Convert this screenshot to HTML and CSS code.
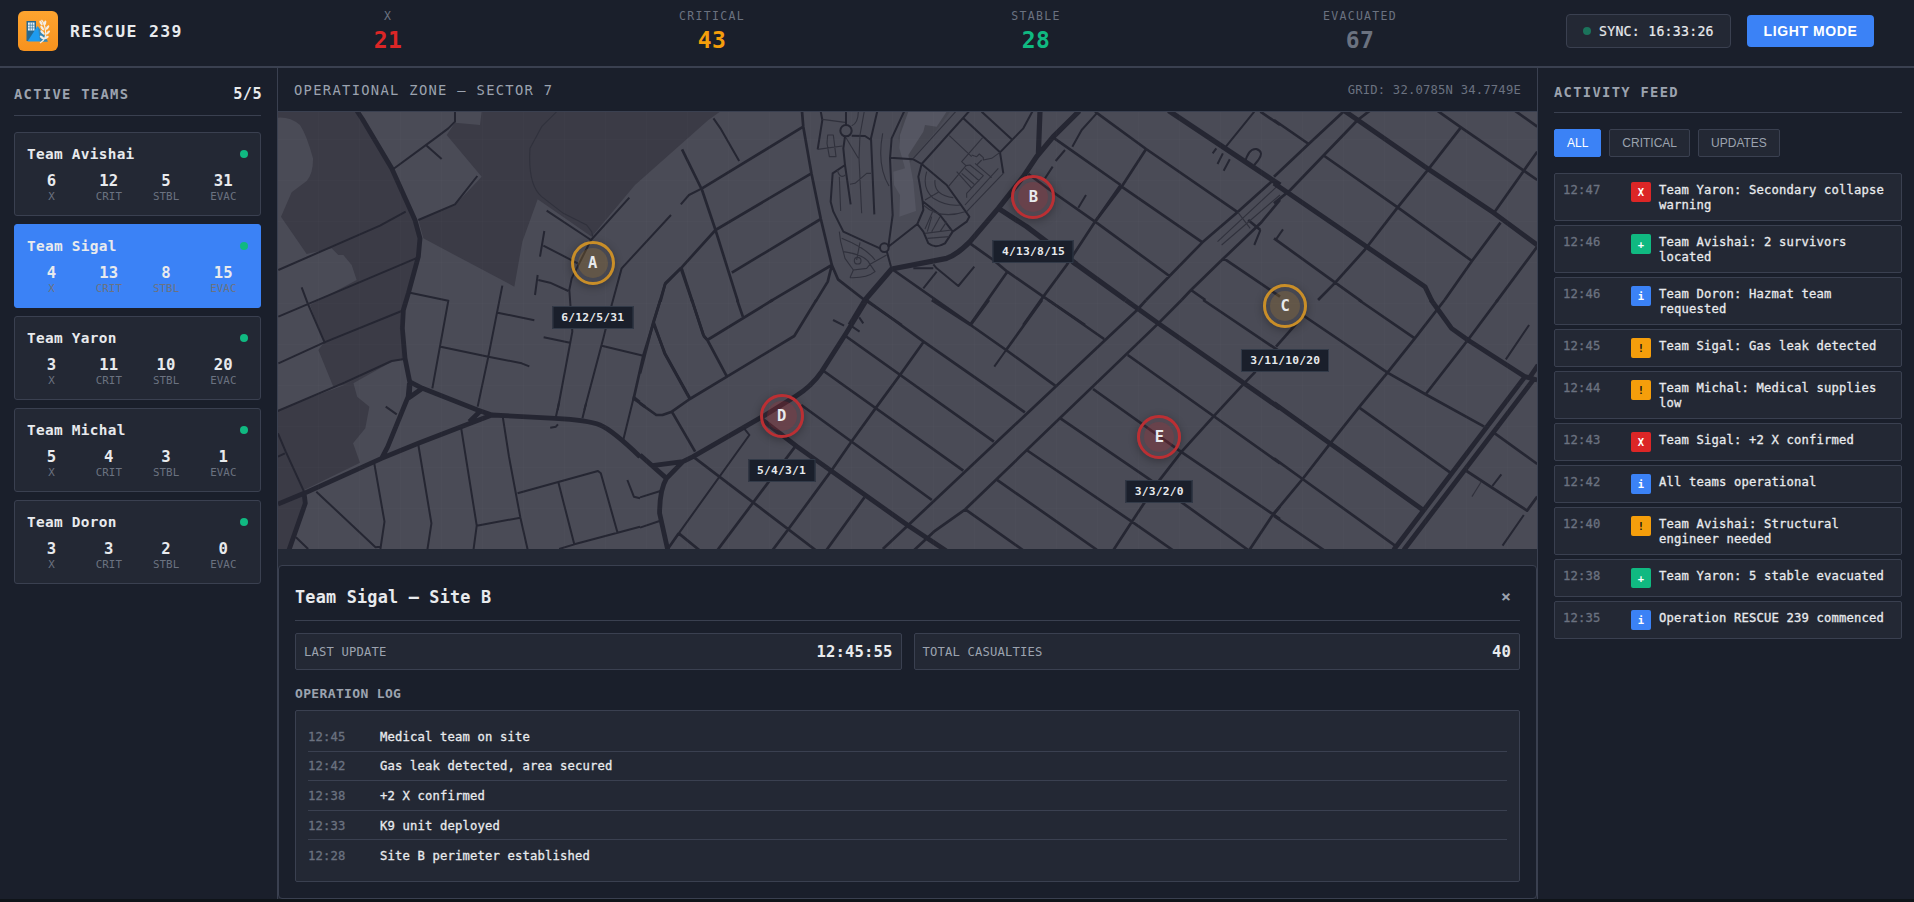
FILE: index.html
```html
<!DOCTYPE html>
<html lang="en">
<head>
<meta charset="utf-8">
<title>RESCUE 239</title>
<link rel="stylesheet" href="styles.css">
</head>
<body>
<div class="app">
<header class="topbar">
  <div class="brand">
    <svg class="logo" viewBox="0 0 40 40">
      <defs><linearGradient id="lg" x1="0" y1="0" x2="0" y2="1"><stop offset="0" stop-color="#fea42f"/><stop offset="1" stop-color="#f6921e"/></linearGradient></defs>
      <rect width="40" height="40" rx="6" fill="url(#lg)"/>
      <rect x="8.500" y="10" width="9.500" height="20" fill="#27688f"/>
      <path d="M9.500 30.500L19.500 15L26 24L29.500 30.500Z" fill="#1e9bef"/>
      <path d="M20 16L26 24L30 30.500H22Z" fill="#3585b5"/>
      <rect x="10" y="11.500" width="6.500" height="8" fill="#e8f4fb"/>
      <path d="M12.200 11.500v8M14.400 11.500v8M10 14.200h6.500M10 16.900h6.500" stroke="#27688f" stroke-width=".6"/>
      <path d="M22 32Q29 28 27.500 20Q27 13 23.500 9" fill="none" stroke="#f3eee5" stroke-width="1.200"/>
      <g fill="#f3eee5"><ellipse cx="23" cy="12" rx="1.200" ry="2.600" transform="rotate(-30 23 12)"/><ellipse cx="27" cy="12" rx="1.200" ry="2.600" transform="rotate(15 27 12)"/><ellipse cx="24.200" cy="17" rx="1.200" ry="2.800" transform="rotate(-35 24.200 17)"/><ellipse cx="29.500" cy="16.500" rx="1.200" ry="2.600" transform="rotate(35 29.500 16.500)"/><ellipse cx="24.500" cy="21.500" rx="1.200" ry="2.800" transform="rotate(-45 24.500 21.500)"/><ellipse cx="30" cy="21.500" rx="1.200" ry="2.600" transform="rotate(45 30 21.500)"/><ellipse cx="24" cy="26.500" rx="1.200" ry="2.600" transform="rotate(-55 24 26.500)"/><ellipse cx="28.500" cy="26.500" rx="1.200" ry="2.500" transform="rotate(60 28.500 26.500)"/></g>
    </svg>
    <span class="brand-name">RESCUE 239</span>
  </div>
  <div class="totals">
    <div class="total red"><span>X</span><b>21</b></div>
    <div class="total amber"><span>CRITICAL</span><b>43</b></div>
    <div class="total green"><span>STABLE</span><b>28</b></div>
    <div class="total gray"><span>EVACUATED</span><b>67</b></div>
  </div>
  <div class="controls">
    <div class="sync"><i></i><span>SYNC: 16:33:26</span></div>
    <button class="mode">LIGHT MODE</button>
  </div>
</header>
<div class="columns">
<aside class="teams">
  <div class="teams-head"><h2>ACTIVE TEAMS</h2><span>5/5</span></div>
  <div class="team-list">
    <div class="team"><div class="team-name"><b>Team Avishai</b><i></i></div><div class="nums"><div><b>6</b><span>X</span></div><div><b>12</b><span>CRIT</span></div><div><b>5</b><span>STBL</span></div><div><b>31</b><span>EVAC</span></div></div></div>
    <div class="team active"><div class="team-name"><b>Team Sigal</b><i></i></div><div class="nums"><div><b>4</b><span>X</span></div><div><b>13</b><span>CRIT</span></div><div><b>8</b><span>STBL</span></div><div><b>15</b><span>EVAC</span></div></div></div>
    <div class="team"><div class="team-name"><b>Team Yaron</b><i></i></div><div class="nums"><div><b>3</b><span>X</span></div><div><b>11</b><span>CRIT</span></div><div><b>10</b><span>STBL</span></div><div><b>20</b><span>EVAC</span></div></div></div>
    <div class="team"><div class="team-name"><b>Team Michal</b><i></i></div><div class="nums"><div><b>5</b><span>X</span></div><div><b>4</b><span>CRIT</span></div><div><b>3</b><span>STBL</span></div><div><b>1</b><span>EVAC</span></div></div></div>
    <div class="team"><div class="team-name"><b>Team Doron</b><i></i></div><div class="nums"><div><b>3</b><span>X</span></div><div><b>3</b><span>CRIT</span></div><div><b>2</b><span>STBL</span></div><div><b>0</b><span>EVAC</span></div></div></div>
  </div>
</aside>
<main class="center">
  <div class="zone-head"><span class="zone-title">OPERATIONAL ZONE – SECTOR 7</span><span class="grid-ref">GRID: 32.0785N 34.7749E</span></div>
  <div class="map">
    <svg class="streets" viewBox="278 112 1259 437" preserveAspectRatio="none">
      <g class="park" transform="translate(275 105) scale(.33333)">
        <path d="M8 20H245L350 190L430 370L435 400L430 455L385 610L380 680L388 762L350 770L235 835L175 845L130 735L148 712L105 600L245 525L230 480L205 450L190 450L170 430L95 447L18 335L50 262L95 228Q115 205 114 160Q95 90 75 60Q45 35 8 38Z"/>
        <path d="M620 20L615 60L540 53L515 90L620 215L540 300L430 345L445 400L718 545L742 410L788 283L950 395L1080 240L1300 45L1335 20Z"/>
      </g>
      <g class="park" transform="translate(0 300) scale(.40816 .33333)">
        <path d="M681 330L865 245L875 290L905 320L895 385L865 430L882 488L745 570V610L708 747H681Z"/>
      </g>
      <g transform="translate(790 105) scale(.33333)">
        <path fill="#454650" d="M343 20L325 100L345 180H355L385 140L440 75L480 20Z"/>
        <path fill="#555662" d="M355 20L330 90L328 130L345 190L310 200L312 240L330 270L328 335L378 318L370 230L355 150L400 80L405 60L440 65L470 20Z"/>
      </g>
      <g class="road" transform="translate(275 105) scale(.33333)">
        <path class="w5" d="M246 18L262 42L350 190L420 345L435 400L430 455L400 565L385 615L382 670L390 760L405 835L403 870"/>
        <path class="w2" d="M10 495L315 362L392 320M10 635L430 457M10 775L148 712L380 618M8 918L210 832L350 768L388 762M80 547L98 595L150 715M540 20V50L520 70L480 100L355 192M455 122L500 162M430 345L540 298L607 213M815 317L948 405L1063 278M808 378L795 455M805 422L885 463L908 475M948 405L890 520L883 555L892 680L848 915M788 510L780 570M790 525L825 533L880 558M1188 330L1040 490L1010 600L985 700L928 915M980 722L1105 752M806 697L885 713M405 563L520 587L472 850M682 542L640 755L608 905M668 623L778 646M497 725L640 755L740 775L763 784"/>
        <path class="w1" d="M845 20L800 65L765 130Q758 240 800 275L865 325L935 360L950 380L953 395"/>
        <path class="w3" d="M1217 490L1170 538L1135 655L1105 752L1075 885M1220 490L1285 690L1297 705M1135 655L1170 745L1245 880M1075 880L1110 905"/>
      </g>
      <g class="road" transform="translate(0 300) scale(.40816 .33333)">
        <path class="w5" d="M1003 245L1035 265L1170 330L1205 345L1360 355Q1440 360 1470 375Q1500 390 1568 470M1003 250L1000 290L950 440L935 475M681 612L745 580L935 475L1025 430L1130 380L1205 345M1035 265L1000 295M1175 335L1150 365M745 580L748 610L708 750"/>
        <path class="w2" d="M917 490L942 665L932 747M775 575L920 742L932 740M725 712L755 747M1025 435L1057 670L1047 750M1130 385L1168 677L1160 750M1168 677L1275 653M1232 352L1247 470L1275 653L1293 750M1268 580L1465 513L1472 520L1513 698M1368 547L1407 733M1370 747L1407 733L1513 698L1568 680M1537 540L1553 590L1568 595M1553 290L1568 305M1553 290L1527 420M1370 305L1362 350M1436 310L1427 355M1348 383L1362 380L1367 373M945 320L972 343M681 400L700 455L745 575M681 470L698 460"/>
      </g>
      <g class="road" transform="translate(640 0) scale(.40816 .33333)">
        <path class="w2" d="M180 355L197 385L243 483M100 613L120 585L152 565M1505 335L1432 445M1412 445L1403 460M1428 460L1415 492M1445 478L1430 512M1482 490Q1490 445 1510 447Q1530 455 1515 480L1505 495M1520 690L1505 735"/>
        <path class="w3" d="M103 448L152 570L185 690L240 905M152 565L400 380M185 690L420 520M185 690L100 805L62 850L50 905M100 805L128 905M225 818L443 657M318 905L470 795M397 335L400 380L420 520L443 657L470 795L485 838L550 900M470 795L460 845L430 905M1520 335L1568 375M1115 335L1240 447L1465 637M1490 660L1520 690M1180 560L1378 727M1115 665L1297 828M1240 447L1180 560L1115 665M1350 870L1385 900M1430 775L1568 890M1547 545L1465 635L1378 727L1240 900M1568 600L1520 670L1430 775L1350 870L1327 900"/>
        <path class="w1" d="M1560 560L1415 725M1568 585L1425 735M1465 637L1495 685"/>
        <path class="w6" d="M1295 332L1568 555M1060 785L1190 900"/>
      </g>
      <g class="road" transform="translate(790 105) scale(.33333)">
        <path class="w6" d="M750 18L745 150M868 18L790 95L740 155L700 215L625 310L540 410Q500 450 470 460L305 492L225 585L180 660M625 310L710 365L860 478"/>
        <path class="w3" d="M715 207L780 255L915 350M790 98L992 240M992 240L915 350L830 480L760 575L700 660M540 415L610 465L652 500L760 575L885 660M310 495L545 660M652 500L540 660M225 585L335 660"/>
        <path class="w2" d="M920 25L875 75L847 125M825 135L797 168M788 185L765 220M888 270L865 308M553 485L505 543L440 490L430 478M440 500L400 550M370 490H430M728 18L700 70L630 142L640 205M575 20L665 103M520 40L630 142M538 18L395 177L385 215L398 290L400 315L382 357L295 425M300 158L370 163L395 177L470 240L538 335L530 350L488 380L465 415Q435 432 415 415L400 380L382 357M400 290L450 330L488 380M343 18L305 100L300 160L308 330L295 425M270 430L230 412L160 380L130 320L122 290L128 205L165 180M262 18L243 100L253 328M165 95L160 130L165 180L182 298M185 92L225 93L243 105M92 18L97 45L83 133M168 18V60M290 438L303 485"/>
        <path class="w1" d="M83 133L157 123M97 43L165 52M205 18Q205 55 185 62M223 18L210 90L207 160L215 325M278 85Q260 180 297 243M148 215L152 318M180 238L195 235L230 205L243 205M168 98L205 160M113 90H130L138 155H118L111 115ZM148 380L152 410L165 460L190 495M180 518L190 495L230 490L240 478L255 500Q230 520 180 518M160 440Q230 450 240 478L290 450M155 400Q230 430 255 465M210 412L200 465M142 195Q150 225 168 208M497 20L370 160M410 200Q395 250 430 280Q470 305 510 300M435 225Q430 270 490 278M405 285L445 262M400 300Q450 345 525 320M430 315L405 372M425 335L412 380M450 335L425 380M470 350L450 380M405 385L485 375M412 400L478 395M478 92L545 155M578 98L515 170L528 182L475 245M545 150L560 155L568 147L580 158V165L605 160L630 142M528 182L540 180L580 212L530 265V278M555 175L605 218M575 165L560 180M500 200L545 250M515 205L555 240M525 190L568 228M640 205L530 320M625 190L525 300"/>
        <circle class="w2" cx="168" cy="77" r="17"/><circle class="w2" cx="283" cy="428" r="13"/><circle class="w1" cx="203" cy="467" r="10"/>
      </g>
      <g class="road" transform="translate(640 300) scale(.40816 .33333)">
        <path class="w5" d="M555 0L505 100L445 215Q420 260 380 290L300 350L130 470L105 485L30 497M0 465L65 535M105 485L65 535Q48 570 48 640L68 750M300 360L385 440L655 675L750 752M1190 0L1270 70L1480 250L1568 325"/>
        <path class="w3" d="M50 0L33 65L0 220M33 65L60 160L122 297M127 0L157 110L165 120L213 230M238 0L252 50M165 120L325 0M0 310L40 345H55L78 335L122 297L213 230L378 108L432 0M78 335L135 455M95 700L145 750M130 470L430 750M380 440L190 750M695 125L637 225L577 325L517 427L467 515L362 690L325 750M550 592L457 750M555 0L695 125L943 337M500 105L867 425M450 213L792 512M395 315L715 600M715 0L810 75L897 150L1017 257M1000 0L1137 117M810 75L855 0M985 0L897 150M1240 0L1218 30L595 747M1327 0L1270 70L797 628L720 695L672 750M1195 165L1568 490M1110 267L1325 455L1568 657M1030 355L1245 535L1490 750M947 450L1205 665L1305 750M873 538L1120 750M797 628L938 750M1380 0L1568 155M1508 215L1480 250L1407 347L1327 455L1270 545L1205 665L1160 750M1568 620L1550 645L1493 750M68 747L95 700"/>
        <path class="w2" d="M897 150L868 200M0 592L50 573M0 683L48 663M95 700L268 405L255 385M473 60L500 77M520 80L538 95M537 52L547 70"/>
      </g>
      <g class="road" transform="translate(1274 0) scale(.40816 .33333)">
        <path class="w5" d="M0 550L370 860L387 903M172 332L205 360L375 505L540 640L645 735"/>
        <path class="w3" d="M0 360L85 432M0 530L85 432L170 335M0 610L40 570L205 360L235 332M120 465L303 622L485 783L418 900M400 332L458 382L612 512L645 540M590 332L645 380M458 382L378 508L303 622L222 750L150 848L108 900M645 455L612 512L540 637M555 668L485 783M645 740L545 905M0 715L150 848L215 905"/>
        <path class="w2" d="M22 688L5 718"/>
      </g>
      <g class="road" transform="translate(1274 300) scale(.40816 .33333)">
        <path class="w5" d="M385 0L435 85L475 120L615 230L645 240M0 310L365 630M615 230L293 750M647 195L625 235M638 235L318 750"/>
        <path class="w3" d="M70 45L278 218L370 282L515 380M208 0L345 115M418 0L345 115L278 218L208 322L138 430L70 537L0 640M548 0L475 120L372 282M208 322L432 518M0 475L70 537L300 740M0 648L122 750M535 395L645 492M468 510L620 632L645 590M70 50L5 140"/>
        <path class="w2" d="M557 523L535 558M625 75L568 178M612 645L560 737"/>
        <path class="w1" d="M507 547L485 590"/>
      </g>
    </svg>
    <div class="mesh"></div>
    <div class="pin warn" style="left:25%;top:34.6%"><b>A</b><span>6/12/5/31</span></div>
    <div class="pin crit" style="left:60%;top:19.5%"><b>B</b><span>4/13/8/15</span></div>
    <div class="pin warn" style="left:80%;top:44.4%"><b>C</b><span>3/11/10/20</span></div>
    <div class="pin crit" style="left:40%;top:69.6%"><b>D</b><span>5/4/3/1</span></div>
    <div class="pin crit" style="left:70%;top:74.4%"><b>E</b><span>3/3/2/0</span></div>
  </div>
  <section class="detail">
    <div class="detail-head"><h3>Team Sigal – Site B</h3><button>×</button></div>
    <div class="facts">
      <div><span>LAST UPDATE</span><b>12:45:55</b></div>
      <div><span>TOTAL CASUALTIES</span><b>40</b></div>
    </div>
    <h4>OPERATION LOG</h4>
    <div class="log">
      <div><time>12:45</time><span>Medical team on site</span></div>
      <div><time>12:42</time><span>Gas leak detected, area secured</span></div>
      <div><time>12:38</time><span>+2 X confirmed</span></div>
      <div><time>12:33</time><span>K9 unit deployed</span></div>
      <div><time>12:28</time><span>Site B perimeter established</span></div>
    </div>
  </section>
</main>
<aside class="feed">
  <h2>ACTIVITY FEED</h2>
  <div class="filters"><button class="on">ALL</button><button>CRITICAL</button><button>UPDATES</button></div>
  <div class="items">
    <div class="item"><time>12:47</time><i class="x">X</i><span>Team Yaron: Secondary collapse warning</span></div>
    <div class="item"><time>12:46</time><i class="p">+</i><span>Team Avishai: 2 survivors located</span></div>
    <div class="item"><time>12:46</time><i class="n">i</i><span>Team Doron: Hazmat team requested</span></div>
    <div class="item"><time>12:45</time><i class="w">!</i><span>Team Sigal: Gas leak detected</span></div>
    <div class="item"><time>12:44</time><i class="w">!</i><span>Team Michal: Medical supplies low</span></div>
    <div class="item"><time>12:43</time><i class="x">X</i><span>Team Sigal: +2 X confirmed</span></div>
    <div class="item"><time>12:42</time><i class="n">i</i><span>All teams operational</span></div>
    <div class="item"><time>12:40</time><i class="w">!</i><span>Team Avishai: Structural engineer needed</span></div>
    <div class="item"><time>12:38</time><i class="p">+</i><span>Team Yaron: 5 stable evacuated</span></div>
    <div class="item"><time>12:35</time><i class="n">i</i><span>Operation RESCUE 239 commenced</span></div>
  </div>
</aside>
</div>
</div>
</body>
</html>
```
FILE: styles.css
```css
* { box-sizing: border-box; margin: 0; padding: 0; }
body { background: #0f1419; color: #e8eaed; font-family: "DejaVu Sans Mono", "Liberation Mono", monospace; font-size: 12px; overflow: hidden; }
i { font-style: normal; }
.app { height: 902px; padding-bottom: 3px; display: flex; flex-direction: column; }

.topbar { height: 68px; flex: none; display: flex; align-items: center; background: #1a1f2b; border-bottom: 2px solid #3a4050; padding: 0 40px 4px 18px; }
.brand { width: 207px; display: flex; align-items: center; gap: 12px; }
.logo { width: 40px; height: 40px; flex: none; }
.brand-name { font-size: 16.5px; font-weight: 700; letter-spacing: 1.35px; white-space: nowrap; }
.totals { width: 1297px; display: grid; grid-template-columns: repeat(4, 1fr); padding: 2px 0 0 1px; }
.total { display: flex; flex-direction: column; align-items: center; }
.total span { font-size: 11.5px; line-height: 16px; letter-spacing: 1.3px; color: #6b7280; }
.total b { font-size: 23px; line-height: 32px; letter-spacing: .3px; }
.total.red b { color: #dc2626; }
.total.amber b { color: #f59e0b; }
.total.green b { color: #10b981; }
.total.gray b { color: #6b7280; }
.controls { margin-left: 44px; display: flex; align-items: center; gap: 16px; }
.sync { width: 165px; height: 34px; display: flex; align-items: center; gap: 8px; padding: 0 16px; background: #232834; border: 1px solid #3a4050; border-radius: 4px; font-size: 13.2px; letter-spacing: .26px; white-space: nowrap; -webkit-text-stroke: .2px; }
.sync i { width: 8px; height: 8px; border-radius: 50%; background: #1b735b; flex: none; }
.mode { width: 127px; height: 32px; border: 0; border-radius: 4px; background: #3b82f6; color: #fff; font: 700 14px "Liberation Sans", sans-serif; letter-spacing: .6px; }

.columns { flex: 1; display: flex; min-height: 0; }
.teams { width: 278px; flex: none; background: #1a1f2b; border-right: 1px solid #3a4050; padding: 14px 16px 0 14px; }
.teams-head { height: 34px; display: flex; justify-content: space-between; align-items: center; padding-bottom: 9px; border-bottom: 1px solid #3a4050; }
h2 { font-size: 13.8px; letter-spacing: 1.3px; font-weight: 700; color: #9ca3af; }
.teams-head span { font-size: 15.300px; font-weight: 700; letter-spacing: .38px; margin-right: -1px; }
.team-list { margin-top: 16px; display: flex; flex-direction: column; gap: 8px; }
.team { height: 84px; background: #232834; border: 1px solid #3a4050; border-radius: 3px; padding: 11px 12px; }
.team.active { background: #3b82f6; border-color: #3b82f6; }
.team-name { display: flex; justify-content: space-between; align-items: center; height: 20px; font-size: 14.400px; letter-spacing: .3px; }
.team-name i { width: 8px; height: 8px; border-radius: 50%; background: #10b981; }
.nums { display: grid; grid-template-columns: repeat(4, 1fr); gap: 8px; margin-top: 8px; }
.nums div { display: flex; flex-direction: column; align-items: center; }
.nums b { font-size: 15.600px; line-height: 18px; letter-spacing: .2px; }
.nums span { font-size: 10.800px; line-height: 13px; color: #6b7280; letter-spacing: .1px; }

.center { flex: 1; min-width: 0; display: flex; flex-direction: column; background: #232834; }
.zone-head { height: 44px; flex: none; display: flex; justify-content: space-between; align-items: center; padding: 1px 16px 0; background: #1a1f2b; border-bottom: 1px solid #3a4050; }
.zone-title { font-size: 13.800px; letter-spacing: 1.3px; color: #9ca3af; }
.grid-ref { font-size: 12.200px; letter-spacing: .2px; color: #6b7280; }
.map { position: relative; height: 437px; flex: none; background: #4a4b56; overflow: hidden; }
.streets { display: block; width: 100%; height: 100%; }
.park { fill: #3b3b46; }
.road { fill: none; stroke: #252632; stroke-linecap: butt; stroke-linejoin: round; }
.road * { vector-effect: non-scaling-stroke; }
.w1 { stroke-width: 1.100px; stroke: #30313c; }
.w2 { stroke-width: 2px; }
.w3 { stroke-width: 2.700px; }
.w5 { stroke-width: 4.800px; }
.w6 { stroke-width: 5.200px; }
.mesh { position: absolute; inset: 0; background: repeating-linear-gradient(0deg, transparent 0 40px, rgba(255,255,255,.013) 40px 41px), repeating-linear-gradient(90deg, transparent 0 40px, rgba(255,255,255,.013) 40px 41px); }
.pin { position: absolute; width: 44px; height: 44px; margin: -22px 0 0 -22px; border: 3px solid; border-radius: 50%; display: flex; align-items: center; justify-content: center; box-shadow: 0 2px 8px rgba(0,0,0,.3); }
.pin::before { content: ""; position: absolute; inset: 4px; border-radius: 50%; background: currentColor; opacity: .22; }
.pin.warn { color: #c98e28; background: rgba(40,38,40,.1); }
.pin.crit { color: #bb2f33; background: rgba(200,30,30,.06); }
.pin b { position: relative; font-size: 15.500px; color: #e8eaed; }
.pin span { position: absolute; left: 50%; top: 62px; transform: translateX(-50%); height: 23px; line-height: 21px; padding: 0 8px; background: #1a1f2b; border: 1px solid #323a48; color: #e8eaed; font-size: 11.300px; font-weight: 700; letter-spacing: .2px; white-space: nowrap; }

.detail { margin-top: 16px; flex: 1; background: #1a1f2b; border: 1px solid #3a4050; border-radius: 4px; padding: 15px 16px 16px; }
.detail-head { height: 40px; display: flex; justify-content: space-between; align-items: center; padding-bottom: 7px; border-bottom: 1px solid #3a4050; }
h3 { font-size: 16.800px; letter-spacing: .23px; }
.detail-head button { background: none; border: 0; color: #9ca3af; font: 700 16.500px "DejaVu Sans Mono", monospace; padding: 0 9px 2px 0; }
.facts { display: grid; grid-template-columns: 1fr 1fr; gap: 12px; margin-top: 12px; }
.facts div { height: 37px; display: flex; justify-content: space-between; align-items: center; padding: 0 8px; background: #232834; border: 1px solid #3a4050; border-radius: 2px; }
.facts span { font-size: 12.200px; letter-spacing: .16px; color: #9ca3af; }
.facts b { font-size: 15.600px; letter-spacing: .1px; }
h4 { font-size: 13px; letter-spacing: .35px; line-height: 18px; color: #9ca3af; margin: 15px 0 7px; }
.log { background: #232834; border: 1px solid #3a4050; border-radius: 2px; padding: 11px 12px 12px; height: 172px; }
.log div { display: flex; height: 29.600px; align-items: center; padding-top: 1px; border-bottom: 1px solid #3a4050; font-size: 12.200px; letter-spacing: .16px; -webkit-text-stroke: .3px; }
.log div:last-child { border-bottom: 0; }
time { color: #6b7280; }
.log time { width: 72px; }

.feed { width: 377px; flex: none; background: #1a1f2b; border-left: 1px solid #3a4050; padding: 14px 12px 0 16px; }
.feed h2 { height: 31px; line-height: 20px; border-bottom: 1px solid #3a4050; }
.filters { display: flex; gap: 8px; margin: 16px 0; }
.filters button { height: 28px; padding: 0 12px; background: #232834; border: 1px solid #3a4050; border-radius: 2px; color: #9ca3af; font: 12px "Liberation Sans", sans-serif; }
.filters .on { background: #3b82f6; border-color: #3b82f6; color: #fff; }
.items { display: flex; flex-direction: column; gap: 4px; }
.item { display: flex; padding: 8px; background: #232834; border: 1px solid #3a4050; border-radius: 2px; font-size: 12.200px; letter-spacing: .16px; line-height: 15px; -webkit-text-stroke: .3px; }
.item time { width: 68px; flex: none; }
.item span, .item time { padding-top: 1px; margin-bottom: -1px; }
.item i { width: 20px; height: 20px; flex: none; margin-right: 8px; border-radius: 2px; color: #fff; font-size: 10.500px; font-weight: 700; line-height: 20px; text-align: center; letter-spacing: 0; -webkit-text-stroke: 0; }
.item .x { background: #dc2626; }
.item .p { background: #10b981; }
.item .n { background: #3b82f6; }
.item .w { background: #f59e0b; color: #111; }
```
